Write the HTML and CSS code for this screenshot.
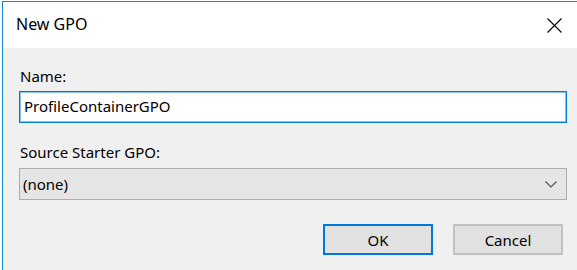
FILE: index.html
```html
<!DOCTYPE html>
<html>
<head>
<meta charset="utf-8">
<link rel="stylesheet" href="styles.css">
</head>
<body>
<div class="window">
  <div class="titlebar">
    <span class="title">New GPO</span>
    <span class="close">
      <svg width="15" height="15" viewBox="0 0 15 15"><path d="M0.5 0.5 L14.5 14.5 M14.5 0.5 L0.5 14.5" stroke="#000" stroke-width="1.1" fill="none"/></svg>
    </span>
  </div>
  <div class="content">
    <div class="label label-name">Name:</div>
    <div class="textbox">ProfileContainerGPO</div>
    <div class="label label-source">Source Starter GPO:</div>
    <div class="combo">
      <span>(none)</span>
      <svg width="12" height="7" viewBox="0 0 12 7"><path d="M0.5 0.5 L6 6 L11.5 0.5" stroke="#555" stroke-width="1.2" fill="none"/></svg>
    </div>
    <div class="buttons">
      <div class="btn btn-default">OK</div>
      <div class="btn">Cancel</div>
    </div>
  </div>
</div>
</body>
</html>
```
FILE: styles.css
```css
html, body {
  margin: 0;
  padding: 0;
  background: #ffffff;
  overflow: hidden;
}
body {
  width: 577px;
  height: 270px;
  font-family: "Segoe UI", "Noto Sans", "Open Sans", sans-serif;
  font-size: 15px;
  color: #000;
}
.window {
  margin-left: 2px;
  margin-top: 1px;
  width: 575px;
  height: 269px;
  box-sizing: border-box;
  border-left: 1px solid #1883d7;
  border-top: 1px solid #1883d7;
  display: flex;
  flex-direction: column;
}
.titlebar {
  height: 46px;
  flex: none;
  background: #fff;
  display: flex;
  align-items: center;
  padding-left: 13px;
  box-sizing: border-box;
  position: relative;
}
.title {
  font-size: 16px;
  margin-top: -3px;
}
.close {
  position: absolute;
  left: 544px;
  top: 16px;
  width: 15px;
  height: 15px;
}
.close svg { display: block; }
.content {
  flex: 1;
  background: #f0f0f0;
  padding: 18px 0 0 16px;
}
.label {
  line-height: 20px;
  height: 20px;
  padding-left: 1px;
}
.textbox {
  margin-top: 5px;
  width: 548px;
  height: 32px;
  box-sizing: border-box;
  border: 1px solid #0078d7;
  box-shadow: inset 0 0 0 1px #8cc2ee;
  background: #fff;
  padding-left: 4px;
  line-height: 29px;
}
.label-source {
  margin-top: 19px;
}
.combo {
  margin-top: 6px;
  width: 548px;
  height: 32px;
  box-sizing: border-box;
  border: 1px solid #adadad;
  background: #e5e5e5;
  display: flex;
  align-items: center;
  justify-content: space-between;
  padding: 0 9px 0 3px;
  line-height: 29px;
}
.combo svg { display: block; }
.buttons {
  margin-top: 24px;
  width: 544px;
  display: flex;
  justify-content: flex-end;
  gap: 20px;
}
.btn {
  width: 110px;
  height: 31px;
  box-sizing: border-box;
  border: 2px solid #c0c0c0;
  background: #e1e1e1;
  display: flex;
  align-items: center;
  justify-content: center;
}
.btn-default {
  border-color: #0078d7;
}
```
